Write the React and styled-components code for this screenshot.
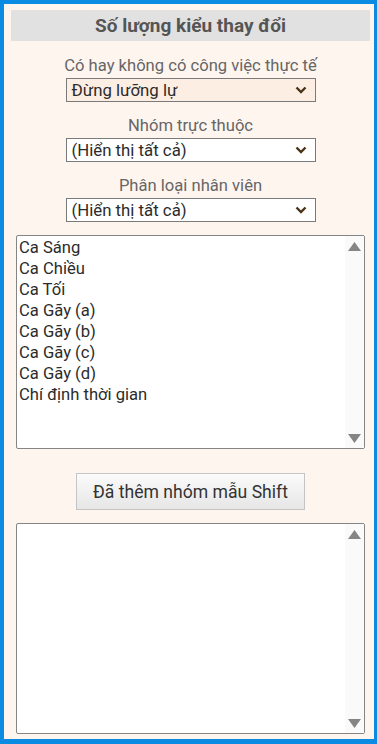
import React from 'react';
import styled, { createGlobalStyle } from 'styled-components';

const GlobalStyle = createGlobalStyle`
  html, body {
    margin: 0;
    padding: 0;
  }
  body {
    font-family: Roboto, "Noto Sans", Arial, sans-serif;
  }
`;

const Frame = styled.div`
  box-sizing: border-box;
  width: 377px;
  height: 744px;
  border-style: solid;
  border-color: #0b8be1;
  border-width: 4px 3px 5px 4px;
  background: #fff5ef;
  padding: 6px 4px 0 7px;
  display: flex;
  flex-direction: column;
  align-items: center;
`;

const TitleBar = styled.div`
  align-self: stretch;
  height: 31px;
  background: #e1e1e1;
  display: flex;
  align-items: center;
  justify-content: center;
  font-size: 19px;
  font-weight: 700;
  color: #555;
`;

const Field = styled.div`
  display: flex;
  flex-direction: column;
  align-items: center;
  margin-top: ${(p) => p.$top}px;
`;

const Label = styled.div`
  font-size: 16.6px;
  line-height: 20px;
  color: #666;
  margin-bottom: 2px;
`;

const SelectBox = styled.div`
  box-sizing: border-box;
  width: 250px;
  height: 24px;
  border: 1px solid #7a7a7a;
  background: ${(p) => (p.$tinted ? '#fdeee4' : '#fff')};
  display: flex;
  align-items: center;
  justify-content: space-between;
  padding: 0 8px 0 5px;
  font-size: 16.8px;
  color: #2b2b2b;
`;

const Chevron = () => (
  <svg width="12" height="8" viewBox="0 0 12 8">
    <path d="M1.5 1.5 L6 6 L10.5 1.5" fill="none" stroke="#4a3418" strokeWidth="2.4" />
  </svg>
);

const ListBox = styled.div`
  box-sizing: border-box;
  align-self: stretch;
  margin: ${(p) => p.$top}px 5px 0 5px;
  height: ${(p) => p.$height}px;
  border: 1px solid #858585;
  border-radius: 2px;
  background: #fff;
  display: flex;
`;

const Items = styled.div`
  flex: 1;
  padding: 1px 0 0 2px;
`;

const Item = styled.div`
  font-size: 16.6px;
  line-height: 21px;
  color: #2b2b2b;
`;

const ScrollTrack = styled.div`
  width: 19px;
  background: #fafafa;
  display: flex;
  flex-direction: column;
  justify-content: space-between;
  align-items: center;
  padding: 6px 0 5px;
`;

const Arrow = ({ down }) => (
  <svg width="13" height="9" viewBox="0 0 13 9">
    <path d={down ? 'M0 0 L13 0 L6.5 9 Z' : 'M0 9 L13 9 L6.5 0 Z'} fill="#858585" />
  </svg>
);

const Button = styled.div`
  box-sizing: border-box;
  margin-top: 24px;
  width: 229px;
  height: 37px;
  border: 1px solid #c4c4c4;
  background: linear-gradient(#fbfbfb, #e6e6e6);
  display: flex;
  align-items: center;
  justify-content: center;
  font-size: 17.6px;
  color: #333;
`;

const shifts = [
  'Ca Sáng',
  'Ca Chiều',
  'Ca Tối',
  'Ca Gãy (a)',
  'Ca Gãy (b)',
  'Ca Gãy (c)',
  'Ca Gãy (d)',
  'Chí định thời gian',
];

const App = () => {
  return (
    <>
      <GlobalStyle />
      <Frame>
        <TitleBar>Số lượng kiểu thay đổi</TitleBar>
        <Field $top={15}>
          <Label>Có hay không có công việc thực tế</Label>
          <SelectBox $tinted>
            <span>Đừng lưỡng lự</span>
            <Chevron />
          </SelectBox>
        </Field>
        <Field $top={14}>
          <Label>Nhóm trực thuộc</Label>
          <SelectBox>
            <span>(Hiển thị tất cả)</span>
            <Chevron />
          </SelectBox>
        </Field>
        <Field $top={14}>
          <Label>Phân loại nhân viên</Label>
          <SelectBox>
            <span>(Hiển thị tất cả)</span>
            <Chevron />
          </SelectBox>
        </Field>
        <ListBox $top={13} $height={214}>
          <Items>
            {shifts.map((s) => (
              <Item key={s}>{s}</Item>
            ))}
          </Items>
          <ScrollTrack>
            <Arrow />
            <Arrow down />
          </ScrollTrack>
        </ListBox>
        <Button>Đã thêm nhóm mẫu Shift</Button>
        <ListBox $top={13} $height={211}>
          <Items />
          <ScrollTrack>
            <Arrow />
            <Arrow down />
          </ScrollTrack>
        </ListBox>
      </Frame>
    </>
  );
};

export default App;
